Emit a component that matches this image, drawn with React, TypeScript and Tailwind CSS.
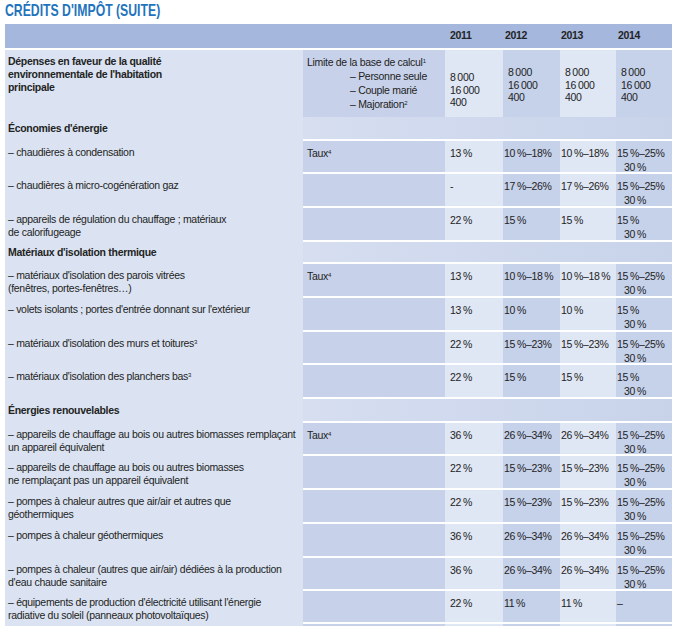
import React from 'react';

type Row = {
  label: React.ReactNode;
  taux?: boolean;
  v: [string, string, string, string];
  h: string;
};

type Section = { section: string; h: string };

const S = '\u2009';
const pct = (n: string) => `${n}${S}%`;
const t1525 = `15${S}%–25%\n30${S}%`;

const rows: (Row | Section)[] = [
  { section: "Économies d'énergie", h: 'h-[24px]' },
  { label: '– chaudières à condensation', taux: true, v: [pct('13'), `10${S}%–18%`, `10${S}%–18%`, t1525], h: 'h-[33px]' },
  { label: '– chaudières à micro-cogénération gaz', v: ['-', `17${S}%–26%`, `17${S}%–26%`, t1525], h: 'h-[34px]' },
  { label: '– appareils de régulation du chauffage ; matériaux\nde calorifugeage', v: [pct('22'), pct('15'), pct('15'), `15${S}%\n30${S}%`], h: 'h-[34px]' },
  { section: "Matériaux d'isolation thermique", h: 'h-[22px]' },
  { label: "– matériaux d'isolation des parois vitrées\n(fenêtres, portes-fenêtres…)", taux: true, v: [pct('13'), `10${S}%–18${S}%`, `10${S}%–18${S}%`, t1525], h: 'h-[34px]' },
  { label: "– volets isolants ; portes d'entrée donnant sur l'extérieur", v: [pct('13'), pct('10'), pct('10'), `15${S}%\n30${S}%`], h: 'h-[34px]' },
  { label: <>– matériaux d'isolation des murs et toitures<sup className="text-[6px]">3</sup></>, v: [pct('22'), `15${S}%–23%`, `15${S}%–23%`, t1525], h: 'h-[33px]' },
  { label: <>– matériaux d'isolation des planchers bas<sup className="text-[6px]">3</sup></>, v: [pct('22'), pct('15'), pct('15'), `15${S}%\n30${S}%`], h: 'h-[34px]' },
  { section: 'Énergies renouvelables', h: 'h-[24px]' },
  { label: '– appareils de chauffage au bois ou autres biomasses remplaçant\nun appareil équivalent', taux: true, v: [pct('36'), `26${S}%–34%`, `26${S}%–34%`, t1525], h: 'h-[33px]' },
  { label: '– appareils de chauffage au bois ou autres biomasses\nne remplaçant pas un appareil équivalent', v: [pct('22'), `15${S}%–23%`, `15${S}%–23%`, t1525], h: 'h-[34px]' },
  { label: '– pompes à chaleur autres que air/air et autres que\ngéothermiques', v: [pct('22'), `15${S}%–23%`, `15${S}%–23%`, t1525], h: 'h-[34px]' },
  { label: '– pompes à chaleur géothermiques', v: [pct('36'), `26${S}%–34%`, `26${S}%–34%`, t1525], h: 'h-[34px]' },
  { label: "– pompes à chaleur (autres que air/air) dédiées à la production\nd'eau chaude sanitaire", v: [pct('36'), `26${S}%–34%`, `26${S}%–34%`, t1525], h: 'h-[33px]' },
  { label: "– équipements de production d'électricité utilisant l'énergie\nradiative du soleil (panneaux photovoltaïques)", v: [pct('22'), pct('11'), pct('11'), '–'], h: 'h-[33px]' },
];

const yearBg = ['bg-[#dfe6f4]', 'bg-[#c6d1ea]', 'bg-[#dfe6f4]', 'bg-[#c6d1ea]'];
const cell = 'border-b-2 border-white pt-[5px] leading-[14px] whitespace-pre overflow-visible';

const App = () => {
  return (
    <div className="w-[677px] h-[626px] overflow-hidden bg-white text-[#232323] text-[10.5px] tracking-[-0.3px] font-['Liberation_Sans',Arial,sans-serif]">
      <h1 className="h-6 pl-[5px] text-[17px] leading-[22px] font-bold tracking-normal text-[#1f74bd]">
        <span className="inline-block origin-left scale-x-[0.72] whitespace-nowrap">CRÉDITS D'IMPÔT (SUITE)</span>
      </h1>

      <div className="ml-[5px] w-[667px] grid grid-cols-[298px_142px_58px_57px_56px_56px]">
        {/* header */}
        <div className="col-span-6 h-[26px] bg-[#a6b7dd] border-b-2 border-white grid grid-cols-[298px_142px_58px_57px_56px_56px] items-center font-bold">
          <div />
          <div />
          <div className="pl-[5px]">2011</div>
          <div className="pl-[2px]">2012</div>
          <div className="pl-[1px]">2013</div>
          <div className="pl-[2px]">2014</div>
        </div>

        {/* base de calcul */}
        <div className="h-[67px] bg-[#dbe3f2] pl-[3px] pt-[5px] leading-[13px] font-bold">
          Dépenses en faveur de la qualité
          <br />
          environnementale de l'habitation
          <br />
          principale
        </div>
        <div className="h-[67px] bg-[#c7d2ea] pl-[4px] pt-[5px] leading-[14px] whitespace-nowrap">
          <div>Limite de la base de calcul<sup className="text-[6px]">1</sup></div>
          <div className="pl-[43px]">– Personne seule</div>
          <div className="pl-[43px]">– Couple marié</div>
          <div className="pl-[43px]">– Majoration<sup className="text-[6px]">2</sup></div>
        </div>
        {yearBg.map((bg, i) => (
          <div key={i} className={`h-[67px] ${bg} pl-[5px] leading-[12.5px] whitespace-nowrap ${i === 0 ? 'pt-[21px]' : 'pt-[16px] pl-[1px]'}`}>
            8{S}000
            <br />
            16{S}000
            <br />
            400
          </div>
        ))}

        {rows.map((r, i) =>
          'section' in r ? (
            <React.Fragment key={i}>
              <div className={`${r.h} bg-[#dbe3f2] pl-[3px] font-bold flex items-center`}>{r.section}</div>
              <div className={`${r.h} col-span-5 border-b-2 border-white bg-gradient-to-r from-[#d6def0] to-[#c8d3ea]`} />
            </React.Fragment>
          ) : (
            <React.Fragment key={i}>
              <div className={`${r.h} bg-[#dbe3f2] pl-[3px] pt-[5px] leading-[13px] whitespace-pre`}>{r.label}</div>
              <div className={`${r.h} ${cell} bg-[#c7d2ea] pl-[4px]`}>
                {r.taux ? <>Taux<sup className="text-[6px]">4</sup></> : null}
              </div>
              {r.v.map((x, j) => (
                <div key={j} className={`${r.h} ${cell} ${yearBg[j]} ${j === 0 ? 'pl-[5px]' : 'pl-[1px]'}`}>
                  {x.split('\n').map((ln, k) => (
                    <div key={k} className={k ? 'pl-[7px]' : ''}>{ln}</div>
                  ))}
                </div>
              ))}
            </React.Fragment>
          )
        )}

        {/* next row, cut off */}
        <div className="h-[20px] bg-[#dbe3f2]" />
        <div className="bg-[#c7d2ea]" />
        {yearBg.map((bg, i) => (
          <div key={i} className={bg} />
        ))}
      </div>
    </div>
  );
};

export default App;
